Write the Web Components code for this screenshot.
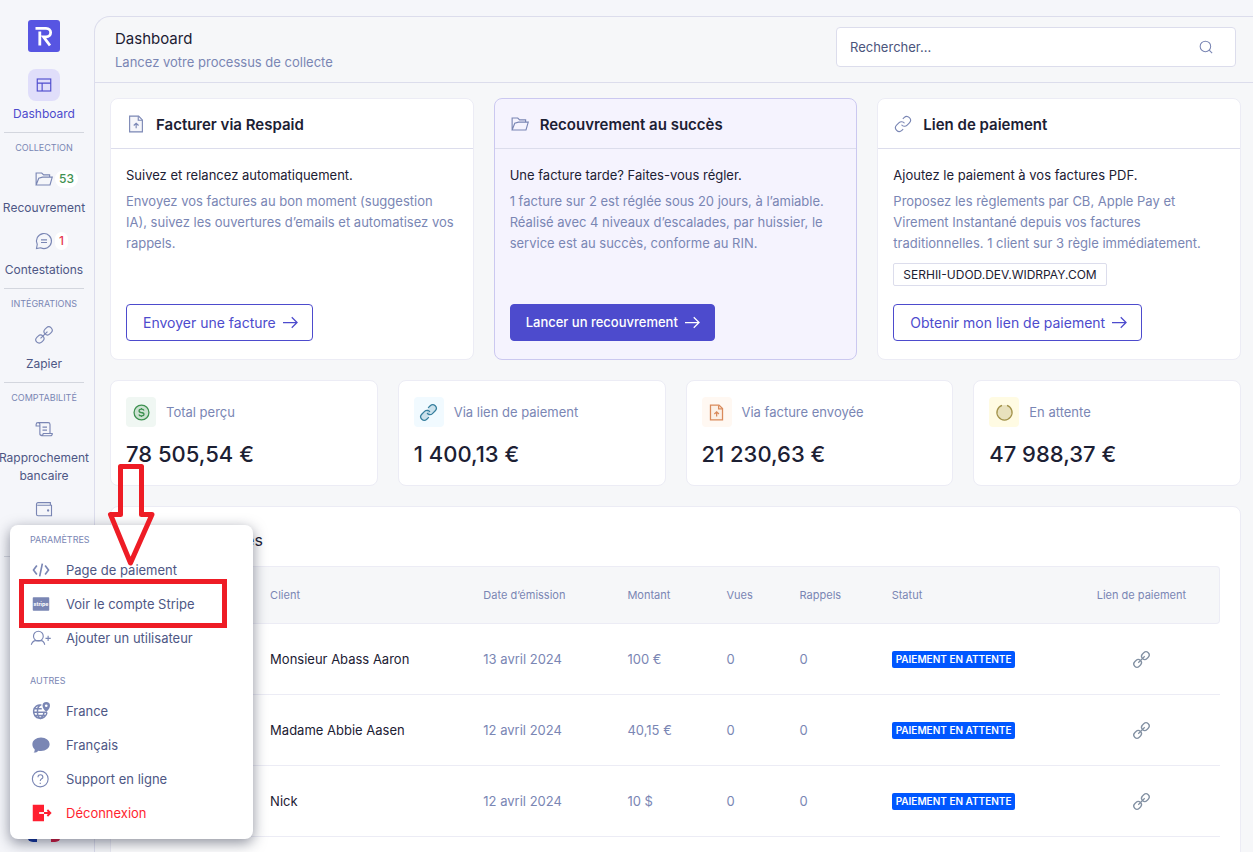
<!DOCTYPE html>
<html lang="fr">
<head>
<meta charset="utf-8">
<meta name="viewport" content="width=device-width, initial-scale=1">
<title>Respaid – Dashboard</title>
<style>
  :root {
    --ink: #1c2033; --muted: #7a86b4; --label: #4e5785; --brand: #4d4bcd;
    --line: #dcddec; --soft: #ececf5; --surface: #f6f7f9;
  }
  body { margin: 0; background: #f5f6fa; color: var(--ink); font: 13px/21px Inter, "Liberation Sans", sans-serif; }
</style>
</head>
<body>
<app-shell>
  <side-nav slot="nav">
    <nav-item icon="layout" active>Dashboard</nav-item>
    <nav-section label="Collection">
      <nav-item icon="folder" count="53" tone="#3f9150">Recouvrement</nav-item>
      <nav-item icon="chat" count="1" tone="#e63950">Contestations</nav-item>
    </nav-section>
    <nav-section label="Intégrations">
      <nav-item icon="chain">Zapier</nav-item>
    </nav-section>
    <nav-section label="Comptabilité">
      <nav-item icon="scroll">Rapprochement bancaire</nav-item>
      <nav-item icon="wallet"></nav-item>
    </nav-section>
    <nav-section></nav-section>
  </side-nav>
  <page-header slot="header" heading="Dashboard" subtitle="Lancez votre processus de collecte"></page-header>
  <card-row>
    <action-card icon="fileup" heading="Facturer via Respaid" lead="Suivez et relancez automatiquement." action="Envoyer une facture">Envoyez vos factures au bon moment (suggestion IA), suivez les ouvertures d’emails et automatisez vos rappels.</action-card>
    <action-card featured icon="folder" heading="Recouvrement au succès" lead="Une facture tarde? Faites-vous régler." action="Lancer un recouvrement">1 facture sur 2 est réglée sous 20 jours, à l’amiable. Réalisé avec 4 niveaux d’escalades, par huissier, le service est au succès, conforme au RIN.</action-card>
    <action-card icon="link" heading="Lien de paiement" lead="Ajoutez le paiement à vos factures PDF." action="Obtenir mon lien de paiement" domain="SERHII-UDOD.DEV.WIDRPAY.COM">Proposez les règlements par CB, Apple Pay et Virement Instantané depuis vos factures traditionnelles. 1 client sur 3 règle immédiatement.</action-card>
  </card-row>
  <card-row>
    <stat-card icon="coin" label="Total perçu" style="--tone:#3d9150;--tint:#f0f7f3">78 505,54 €</stat-card>
    <stat-card icon="linkfill" label="Via lien de paiement" style="--tone:#377f9e;--tint:#f1faff">1 400,13 €</stat-card>
    <stat-card icon="fileup" label="Via facture envoyée" style="--tone:#d98a5b;--tint:#fff8f2">21 230,63 €</stat-card>
    <stat-card icon="pending" label="En attente" style="--tone:#a2924a;--tint:#fffbe3">47 988,37 €</stat-card>
  </card-row>
  <payment-list></payment-list>
  <settings-menu slot="overlay">
    <menu-group label="Paramètres">
      <menu-item icon="code">Page de paiement</menu-item>
      <menu-item icon="stripe">Voir le compte Stripe</menu-item>
      <menu-item icon="useradd">Ajouter un utilisateur</menu-item>
    </menu-group>
    <menu-group label="Autres">
      <menu-item icon="globe">France</menu-item>
      <menu-item icon="bubble">Français</menu-item>
      <menu-item icon="help">Support en ligne</menu-item>
      <menu-item icon="logout" danger>Déconnexion</menu-item>
    </menu-group>
  </settings-menu>
  <guide-marks slot="overlay"></guide-marks>
</app-shell>

<script>
const ICONS = {
  logo: '<rect width="32" height="32" rx="3" fill="#5755e2" stroke="none"/><path stroke="#fff" stroke-width="2.800" d="M7.500 8.300H18c6.200 0 6.200 8.500 0 8.500h-2.500l6.500 8.700M11.800 11.500v14"/>',
  layout: '<rect x="3" y="4" width="18" height="16"/><path d="M3 9.500h18M9.500 9.500V20"/>',
  folder: '<path d="M1.500 20V4h7.500L11.500 6.500h8V10M1.500 20l3.500-9 5-1.500h13L20 20z"/>',
  chat: '<path d="M3 16.500A10 10 0 1 1 7.500 21L2 22z"/><path d="M8 10.500h8M8 14h8"/>',
  chain: '<g transform="rotate(-45 12 12)"><rect x="-1.500" y="7.500" width="11.500" height="9" rx="4.500"/><rect x="14" y="7.500" width="11.500" height="9" rx="4.500"/><path d="M5.500 12h13"/></g>',
  link: '<path d="M10 13a5 5 0 0 0 7.540.540l3-3a5 5 0 0 0-7.070-7.070l-1.720 1.710M14 11a5 5 0 0 0-7.540-.540l-3 3a5 5 0 0 0 7.070 7.070l1.710-1.710"/>',
  linkfill: '<g stroke="none" fill="currentColor" fill-opacity=".2"><rect x="-1" y="7" width="14" height="9" rx="4.500" transform="rotate(-45 12 12)"/><rect x="11" y="7.500" width="14" height="9" rx="4.500" transform="rotate(-45 12 12)"/></g><path d="M10 13a5 5 0 0 0 7.540.540l4-4a5 5 0 0 0-7.070-7.070l-3 3M14 11a5 5 0 0 0-7.540-.540l-4 4a5 5 0 0 0 7.070 7.070l3-3"/>',
  scroll: '<path d="M6.500 8V18.500a2.500 2.500 0 0 0 2.500 2.500h11.500a2.500 2.500 0 0 0 2.500-3H11v.5a2.300 2.300 0 0 1-4.500 0M6.500 8V6A2.500 2.500 0 0 0 1.500 6v2h5M4 3.500h13.500a2.500 2.500 0 0 1 2.500 2.500v12M10 9.500h6M10 13.500h6"/>',
  wallet: '<path d="M20.500 7V3.500H4a2 2 0 0 0-2 2V19a2 2 0 0 0 2 2h18V7H3"/><circle cx="17.500" cy="14" r=".8"/>',
  fileup: '<path fill="currentColor" fill-opacity=".07" d="M3.500 1.500h12l5 5V22.500h-17z"/><path d="M15 2v5h5M12.200 17.500v-6M9 14l3.200-3 3.200 3"/>',
  coin: '<circle cx="12" cy="12" r="10.500" fill="currentColor" fill-opacity=".2"/><path d="M15.500 9.200c-.5-1.500-1.800-2-3.500-2-4.500 0-4.500 4.300-.5 4.800 5.500.5 5 4.800.5 4.800-2 0-3.300-.7-3.700-2M12 5.500v1.500M12 17v1.500"/>',
  pending: '<circle cx="12" cy="12" r="10.500" stroke="none" fill="currentColor" fill-opacity=".25"/><path d="M8.500 1.800a10.700 10.700 0 1 0 7 0"/>',
  search: '<circle cx="11" cy="11" r="9"/><path d="M17.500 17.500l5 5"/>',
  arrow: '<path d="M0 12h22M14 3.500l8.500 8.500-8.500 8.500"/>',
  code: '<path stroke-width="2.200" d="M6.500 6L2 12l4.500 6M17.500 6L22 12l-4.500 6M13.800 3.500l-3.600 17"/>',
  stripe: '<rect x="1" y="3" width="22" height="18" rx="1" fill="currentColor" stroke="none"/><text x="12" y="14" text-anchor="middle" font-family="Inter, sans-serif" font-weight="700" font-size="7" fill="#fff" stroke="none">stripe</text>',
  useradd: '<path d="M-1 21c1.500-4 4-5.500 6-5.500h7c2.500 0 4 1.500 5 5.500"/><circle cx="8.500" cy="9.500" r="6.500"/><path d="M18 12.500h7M21.500 9v7"/>',
  globe: '<path stroke-width="2" d="M12.500 4A9 9 0 1 0 20 14M2 13.500h18M4 18h14M4 9h9M11 4c-5 3-5 15 0 18 4-2.500 5-6 4.800-9"/><path fill="currentColor" stroke="none" d="M19 0a5 5 0 0 1 5 5c0 4-5 8-5 8s-5-4-5-8a5 5 0 0 1 5-5z"/><circle cx="19" cy="5" r="1.800" fill="#fff" stroke="none"/>',
  bubble: '<path fill="currentColor" stroke="none" d="M12 2c6.500 0 11.500 4 11.500 9S18.500 20 12 20c-1.500 0-2.500 0-3.500-.5C7 21.500 4 22.500 2 22c1.500-1 1.800-3 1.500-4.500C1.500 16 .5 13.500.5 11 .5 6 5.500 2 12 2z"/>',
  help: '<circle cx="11" cy="12" r="10.500"/><path d="M8 9.500c0-4.500 6.500-4 6.500 0 0 2.500-3.500 2-3.500 5M11 17v1.500"/>',
  logout: '<path fill="currentColor" stroke="none" d="M1 1h15v22H1z"/><path stroke="#fff" stroke-width="2.400" d="M9.500 12H16"/><path stroke-width="2.400" d="M16 12h8M20.500 8l4 4-4 4"/>'
};
const icon = (name, size = 18, weight = 1.5) =>
  `<svg width="${size}" height="${size}" viewBox="${name === 'logo' ? '0 0 32 32' : '0 0 24 24'}" fill="none" stroke="currentColor" stroke-width="${weight}" overflow="visible" aria-hidden="true">${ICONS[name]}</svg>`;

const define = (tag, render) => customElements.define(tag, class extends HTMLElement {
  connectedCallback() {
    if (this.shadowRoot) return;
    const get = n => this.getAttribute(n) || '';
    this.attachShadow({ mode: 'open' }).innerHTML =
      `<style>:host,*{box-sizing:border-box}svg{display:block;flex:none}h1,h2,p{margin:0;font-weight:400}</style>` + render(get, this);
  }
});

define('app-shell', () => `<style>
  :host{display:flex;height:100vh;overflow:hidden;position:relative}
  main{flex:1;min-width:0;margin-top:16px;border:1px solid var(--line);border-width:1px 0 0 1px;border-radius:16px 0 0 0;background:var(--surface);overflow:hidden}
  .content{display:flex;flex-direction:column;gap:20px;padding:15px 12px 15px 15px}
</style><slot name="nav"></slot><main><slot name="header"></slot><div class="content"><slot></slot></div></main><slot name="overlay"></slot>`);

define('side-nav', () => `<style>
  :host{display:block;width:94px;flex:none;padding-right:6px}
  nav{display:flex;flex-direction:column}
  a{align-self:center;margin:20px 0 17px}
  .flag{align-self:center;width:34px;height:24px;margin-top:231px;border-radius:6px;background:linear-gradient(90deg,#0b2f9c 0 28%,#f5f6fa 28% 72%,#d8143a 72%)}
</style><nav><a href="#" aria-label="Respaid">${icon('logo', 32)}</a><slot></slot><div class="flag"></div></nav>`);

define('nav-section', get => `<style>
  :host{display:block;margin-top:9px}
  div{border-top:1px solid #d3d6de;margin:0 4px}
  p{height:30px;line-height:30px;text-align:center;font-size:9px;text-transform:uppercase;color:var(--muted)}
  section{display:flex;flex-direction:column;gap:8px}
</style><div></div><p>${get('label')}</p><section><slot></slot></section>`);

define('nav-item', get => `<style>
  :host{display:block}
  a{display:flex;flex-direction:column;align-items:center;gap:4px;text-decoration:none;color:var(--label);font-size:12px;line-height:18px;text-align:center}
  .icon{position:relative;display:grid;place-items:center;width:32px;height:32px;border-radius:8px;color:var(--muted)}
  .label{min-height:18px;margin:0 -2px}
  b{position:absolute;left:27px;top:7px;padding:0 4px;border-radius:9px;background:#fff;font-weight:500;line-height:18px;color:${get('tone')}}
  :host([active]) a,:host([active]) .icon{color:var(--brand)}
  :host([active]) .icon{background:#e0defa}
</style><a href="#"><span class="icon">${icon(get('icon'))}${get('count') ? `<b>${get('count')}</b>` : ''}</span><span class="label"><slot></slot></span></a>`);

define('page-header', get => `<style>
  :host{display:flex;align-items:center;justify-content:space-between;height:66px;padding:0 17px 0 20px;border-bottom:1px solid var(--line)}
  h1{font-size:15px;line-height:26px}
  p{color:var(--muted);line-height:21px}
  label{display:flex;align-items:center;width:400px;height:40px;margin-bottom:5px;padding:0 22px 0 13px;border:1px solid var(--line);border-radius:4px;background:#fff;color:var(--muted)}
  input{flex:1;min-width:0;border:0;outline:0;padding:0;background:none;font:inherit;color:var(--ink)}
  input::placeholder{color:#4b557c;opacity:1}
</style><div><h1>${get('heading')}</h1><p>${get('subtitle')}</p></div>
<label><input type="search" aria-label="Rechercher" placeholder="Rechercher...">${icon('search', 14, 1.8)}</label>`);

define('card-row', () => `<style>
  :host{display:grid;grid-auto-flow:column;grid-auto-columns:minmax(0,1fr);gap:20px}
</style><slot></slot>`);

define('action-card', get => `<style>
  :host{display:flex;flex-direction:column;border:1px solid var(--soft);border-radius:8px;background:#fff}
  :host([featured]){background:#f5f3fe;border-color:#cbc8f0}
  header{display:flex;align-items:center;gap:11px;height:50px;padding:1px 15px 0 16px;border-bottom:1px solid var(--line);color:var(--muted)}
  h2{font-size:15px;font-weight:600;color:var(--ink)}
  .body{flex:1;display:flex;flex-direction:column;align-items:flex-start;padding:16px 17px 18px 15px}
  .text{margin-top:5px;color:var(--muted)}
  .domain{margin-top:9px;padding:0 9px;border:1px solid var(--line);border-radius:2px;font-size:12px}
  .space{flex:1;min-height:18px}
  button{display:flex;align-items:center;gap:7px;height:37px;padding:0 14px 0 16px;border:1px solid var(--brand);border-radius:4px;background:#fff;color:var(--brand);font:inherit;font-size:14px}
  :host([featured]) button{background:var(--brand);color:#fff;font-size:13px;font-weight:500;padding-left:15px}
</style><header>${icon(get('icon'))}<h2>${get('heading')}</h2></header>
<div class="body"><p>${get('lead')}</p><p class="text"><slot></slot></p>${get('domain') ? `<span class="domain">${get('domain')}</span>` : ''}
<div class="space"></div><button type="button">${get('action')}${icon('arrow', 15, 2)}</button></div>`);

define('stat-card', get => `<style>
  :host{display:flex;flex-direction:column;gap:12px;padding:16px 15px;border:1px solid var(--soft);border-radius:8px;background:#fff}
  div{display:flex;align-items:center;gap:10px;color:var(--muted)}
  span{display:grid;place-items:center;width:30px;height:30px;border-radius:4px;background:var(--tint);color:var(--tone)}
  p{font-size:22px;line-height:30px;font-weight:500}
</style><div><span>${icon(get('icon'), 17, 1.8)}</span>${get('label')}</div><p><slot></slot></p>`);

define('payment-list', () => {
  const rows = [['Monsieur Abass Aaron', '13 avril 2024', '100 €'], ['Madame Abbie Aasen', '12 avril 2024', '40,15 €'], ['Nick', '12 avril 2024', '10 $']];
  return `<style>
  :host{display:block;padding:21px 20px 24px;border:1px solid var(--soft);border-radius:8px;background:#fff}
  h2{font-size:16px;line-height:24px;margin-bottom:14px}
  table{width:100%;table-layout:fixed;border-collapse:separate;border-spacing:0;color:var(--muted)}
  th,td{padding:0 0 0 15px;text-align:left;border-bottom:1px solid var(--soft);white-space:nowrap}
  th{height:58px;font-size:11px;font-weight:400;background:var(--surface);border-top:1px solid var(--soft)}
  th:first-child{border-left:1px solid var(--soft);border-radius:4px 0 0 4px}
  th:last-child{border-right:1px solid var(--soft);border-radius:0 4px 4px 0}
  th:last-child,td:last-child{padding:0;text-align:center}
  td{height:71px}
  td:nth-child(2){color:var(--ink)}
  .badge{display:block;width:max-content;padding:0 4px;border-radius:2px;background:#0057ff;color:#fff;font-size:10px;line-height:17px;font-weight:600}
  a{display:inline-block;color:#8391a3;vertical-align:middle}
  </style><h2>Derniers impayés</h2>
  <table><colgroup>${[124, 213, 144, 99, 73, 92, 187, 156].map(w => `<col style="width:${w}px">`).join('')}</colgroup>
  <thead><tr><th></th><th>Client</th><th>Date d’émission</th><th>Montant</th><th>Vues</th><th>Rappels</th><th>Statut</th><th>Lien de paiement</th></tr></thead>
  <tbody>${rows.map(([n, d, m]) => `<tr><td></td><td>${n}</td><td>${d}</td><td>${m}</td><td>0</td><td>0</td><td><span class="badge">PAIEMENT EN ATTENTE</span></td><td><a href="#" aria-label="Lien de paiement">${icon('chain', 17, 1.8)}</a></td></tr>`).join('')}</tbody></table>`;
});

define('settings-menu', () => `<style>
  :host{position:absolute;left:10px;top:525px;width:243px;padding-bottom:9px;display:flex;flex-direction:column;gap:11px;border-radius:8px;background:#fff;box-shadow:0 4px 14px rgba(30,35,60,.5)}
</style><slot></slot>`);

define('menu-group', get => `<style>
  :host{display:block}
  p{height:28px;padding-left:20px;font-size:9px;line-height:30px;text-transform:uppercase;color:var(--muted)}
</style><p>${get('label')}</p><slot></slot>`);

define('menu-item', get => `<style>
  :host{display:block}
  a{display:flex;align-items:center;gap:16px;height:34px;padding-left:22px;text-decoration:none;color:var(--label)}
  svg{color:var(--muted)}
  :host([danger]) a,:host([danger]) svg{color:#ff1f30}
</style><a href="#">${icon(get('icon'))}<span><slot></slot></span></a>`);

define('guide-marks', () => `<style>
  :host{position:absolute;left:19px;top:463px;width:208px;height:165px;pointer-events:none}
</style><svg width="208" height="165" viewBox="0 0 208 165" fill="none" stroke="#ee1c25" stroke-width="5"><path stroke-linejoin="round" d="M101.500 3.500h21v48h10.500L111.500 100 91.500 51.500h10z"/><path d="M2.500 118.500h203v44H2.500z"/></svg>`);
</script>
</body>
</html>
